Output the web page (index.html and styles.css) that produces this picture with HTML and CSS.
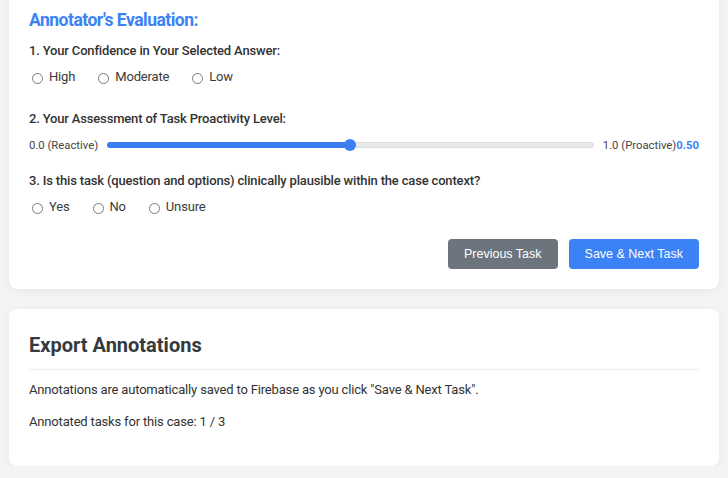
FILE: index.html
```
<!DOCTYPE html>
<html lang="en">
<head>
<meta charset="utf-8">
<title>Annotator's Evaluation</title>
<link rel="stylesheet" href="styles.css">
</head>
<body>
<div class="page">
  <section class="card eval">
    <h3 class="eval-title">Annotator's Evaluation:</h3>

    <div class="question">
      <div class="q-label">1. Your Confidence in Your Selected Answer:</div>
      <div class="options">
        <label class="opt"><input type="radio" name="confidence" value="high"><span>High</span></label>
        <label class="opt"><input type="radio" name="confidence" value="moderate"><span>Moderate</span></label>
        <label class="opt"><input type="radio" name="confidence" value="low"><span>Low</span></label>
      </div>
    </div>

    <div class="question">
      <div class="q-label">2. Your Assessment of Task Proactivity Level:</div>
      <div class="slider-row">
        <span class="s-label">0.0 (Reactive)</span>
        <input class="slider" type="range" min="0" max="1" step="0.01" value="0.5" style="--fill:50%">
        <span class="s-label">1.0 (Proactive)</span><span class="s-value">0.50</span>
      </div>
    </div>

    <div class="question">
      <div class="q-label">3. Is this task (question and options) clinically plausible within the case context?</div>
      <div class="options">
        <label class="opt"><input type="radio" name="plausible" value="yes"><span>Yes</span></label>
        <label class="opt"><input type="radio" name="plausible" value="no"><span>No</span></label>
        <label class="opt"><input type="radio" name="plausible" value="unsure"><span>Unsure</span></label>
      </div>
    </div>

    <div class="actions">
      <button class="btn btn-secondary" type="button">Previous Task</button>
      <button class="btn btn-primary" type="button">Save &amp; Next Task</button>
    </div>
  </section>

  <section class="card export">
    <h2 class="export-title">Export Annotations</h2>
    <p class="export-text">Annotations are automatically saved to Firebase as you click "Save &amp; Next Task".</p>
    <p class="export-text">Annotated tasks for this case: 1 / 3</p>
  </section>
</div>
</body>
</html>
```

FILE: styles.css
```
* {
  box-sizing: border-box;
}

html, body {
  margin: 0;
  padding: 0;
}

body {
  background: #f3f4f6;
  font-family: Roboto, "Liberation Sans", Arial, sans-serif;
  color: #333;
  font-size: 13px;
  overflow: hidden;
}

.page {
  padding: 0 9px;
}

.card {
  background: #fff;
  border-radius: 8px;
  box-shadow: 0 2px 8px rgba(0, 0, 0, 0.06);
  padding: 20px;
}

.eval {
  margin-top: -12px;
}

.eval-title {
  margin: 0 0 9px;
  font-size: 17.5px;
  letter-spacing: -0.5px;
  line-height: 24px;
  font-weight: 700;
  color: #3b82f6;
}

.question {
  margin-bottom: 16px;
}

.q-label {
  font-size: 13px;
  letter-spacing: -0.17px;
  line-height: 20px;
  font-weight: 500;
  color: #333;
  margin-bottom: 6px;
}

.options {
  display: flex;
  align-items: center;
  gap: 20px;
  height: 20px;
  box-sizing: content-box;
  padding-bottom: 6px;
}

.opt {
  display: flex;
  align-items: center;
  font-size: 13px;
  letter-spacing: -0.17px;
  line-height: 20px;
  color: #3a3a3a;
}

.opt input {
  -webkit-appearance: none;
  appearance: none;
  width: 11px;
  height: 11px;
  border: 1px solid #7a7a7a;
  border-radius: 50%;
  margin: 2px 6px 0 3px;
  background: #fff;
}

.slider-row {
  display: flex;
  align-items: center;
  height: 20px;
}

.s-label {
  font-size: 11.3px;
  color: #444;
  white-space: nowrap;
}

.s-value {
  font-size: 11.3px;
  font-weight: 700;
  color: #3b82f6;
}

.slider {
  -webkit-appearance: none;
  appearance: none;
  flex: 1;
  height: 6px;
  margin: 0 9px;
  border-radius: 3px;
  background: linear-gradient(to right, #3b7ff2 var(--fill), #e8e8e8 var(--fill));
  box-shadow: inset 0 0 0 1px rgba(0, 0, 0, 0.04);
  outline: none;
}

.slider::-webkit-slider-thumb {
  -webkit-appearance: none;
  appearance: none;
  width: 12px;
  height: 12px;
  border-radius: 50%;
  background: #3b7ff2;
  border: none;
}

.actions {
  display: flex;
  justify-content: flex-end;
  gap: 11px;
}

.btn {
  height: 30px;
  padding: 0 16px;
  border: none;
  border-radius: 4px;
  font-family: "Liberation Sans", Arial, sans-serif;
  font-size: 12.5px;
  color: #fff;
}

.btn-secondary {
  background: #6c757d;
}

.btn-primary {
  background: #3b82f6;
}

.export {
  margin-top: 20px;
}

.export-title {
  margin: 0;
  font-size: 20px;
  line-height: 32px;
  font-weight: 700;
  color: #343a40;
  padding-bottom: 8px;
  border-bottom: 1px solid #eceef0;
}

.export-text {
  margin: 14px 0 0;
  font-size: 13px;
  letter-spacing: -0.17px;
  line-height: 18px;
  color: #333;
}

.export-title + .export-text {
  margin-top: 11px;
}

.export-text:last-child {
  margin-bottom: 15px;
}
```
